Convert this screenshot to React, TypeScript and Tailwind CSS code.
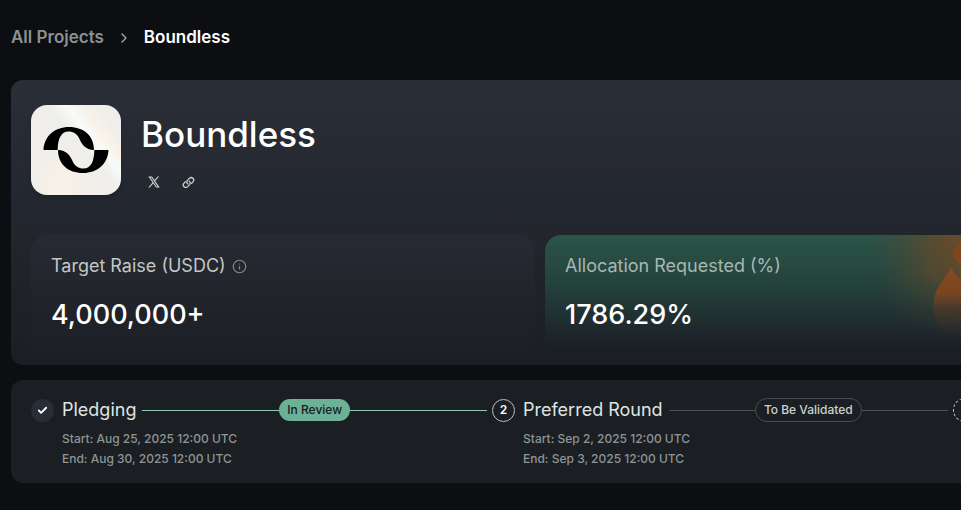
import type { ReactNode } from 'react';
import { Check, ChevronRight, Info } from 'lucide-react';

function BoundlessLogo() {
  const half =
    'M12.5 45 C13 31 24 22 38 22 C53 22 63 31 63 45 C54.5 44.5 51 40 48 33 C46 29 42.5 26.5 37.5 26.5 C30 26.5 26.7 34 26.7 45 Z';
  return (
    <div className="size-[90px] shrink-0 overflow-hidden rounded-2xl bg-[#efeeea] bg-[linear-gradient(50deg,transparent_56%,#f8fbf9_66%,#f9f2e8_74%,transparent_86%),radial-gradient(ellipse_at_35%_88%,#fbf2e6_0%,transparent_35%)] shadow-md">
      <svg viewBox="0 0 90 90" className="size-full" role="img" aria-label="Boundless logo">
        <path d={half} fill="#000" />
        <path d={half} fill="#000" transform="rotate(180 45 45)" />
      </svg>
    </div>
  );
}

function XIcon() {
  return (
    <svg viewBox="0 0 24 24" className="size-3" fill="currentColor" aria-hidden="true">
      <path d="M0.6 1h7.3l5.2 7.1L19.4 1h2.9l-7.9 9 9.1 13h-7.3l-5.8-8L3.500 23H.6l8.500-9.800zM4.700 3.200 17.300 20.800h2L6.800 3.200z" />
    </svg>
  );
}

function LinkIcon() {
  return (
    <svg
      viewBox="0 0 24 24"
      className="size-[13px] shrink-0"
      fill="none"
      stroke="currentColor"
      strokeWidth="2.4"
      strokeLinecap="round"
      aria-hidden="true"
    >
      <path d="M10.500 14.500a4.600 4.600 0 0 1-.4-6.500l3.400-3.600a4.600 4.600 0 0 1 6.700 6.400l-2.400 2.600" />
      <path d="M13.500 9.500a4.600 4.600 0 0 1 .4 6.500l-3.400 3.600a4.600 4.600 0 0 1-6.700-6.400l2.400-2.600" />
    </svg>
  );
}

function Flame() {
  return (
    <svg
      viewBox="0 0 180 120"
      preserveAspectRatio="none"
      className="absolute top-0 right-0 h-[120px] w-[180px]"
      aria-hidden="true"
    >
      <defs>
        <radialGradient id="glow" gradientUnits="userSpaceOnUse" cx="112" cy="22" r="112">
          <stop offset="0" stopColor="#7d4a22" stopOpacity="0.9" />
          <stop offset="0.45" stopColor="#63492c" stopOpacity="0.85" />
          <stop offset="1" stopColor="#45483a" stopOpacity="0" />
        </radialGradient>
        <linearGradient id="flame" x1="0" y1="0" x2="0" y2="1">
          <stop offset="0" stopColor="#874a20" />
          <stop offset="0.35" stopColor="#79451f" />
          <stop offset="0.55" stopColor="#4a392c" />
          <stop offset="1" stopColor="#2e2925" stopOpacity="0" />
        </linearGradient>
        <linearGradient id="fade" x1="0" y1="0" x2="0" y2="1">
          <stop offset="0" stopColor="#fff" />
          <stop offset="0.35" stopColor="#ccc" />
          <stop offset="0.9" stopColor="#000" />
        </linearGradient>
        <mask id="fadeMask">
          <rect width="180" height="120" fill="url(#fade)" />
        </mask>
      </defs>
      <rect width="180" height="120" fill="url(#glow)" mask="url(#fadeMask)" />
      <path d="M82 33C86 40 92 44 98 50L124 104H92C70 100 62 84 65 64C67 52 77 43 82 33Z" fill="url(#flame)" />
      <path d="M108 0C92 5 81 14 85 23C87 28 92 29 100 30Z" fill="#80451f" />
    </svg>
  );
}

function Metric({ label, value, info, highlight }: { label: string; value: string; info?: boolean; highlight?: boolean }) {
  return (
    <div
      className={
        highlight
          ? 'relative overflow-hidden rounded-2xl bg-linear-to-b from-[#2c5549] via-[#24423c] via-40% to-[#1b1e26] to-95% px-5 pt-[17px] pb-[22px]'
          : 'relative rounded-2xl bg-linear-to-b from-[#272a32] to-[#1c1f25] px-5 pt-[17px] pb-[22px]'
      }
    >
      {highlight && <Flame />}
      <div className="relative flex items-center gap-1.5">
        <h2 className={highlight ? 'text-lg leading-7 text-[#a6b8b2]' : 'text-lg leading-7 text-[#c2c8c5]'}>{label}</h2>
        {info && (
          <button type="button" aria-label="About the target raise" className="text-[#868b8d]">
            <Info size={15} strokeWidth={1.8} />
          </button>
        )}
      </div>
      <p className="relative mt-[17px] text-[27px] leading-9 font-medium text-white">{value}</p>
    </div>
  );
}

type StepProps = {
  marker: ReactNode;
  title: string;
  lines: string[];
  badge: ReactNode;
  active?: boolean;
};

function Step({ marker, title, lines, badge, active }: StepProps) {
  return (
    <li className="min-w-0 flex-1">
      <div className="flex h-6 items-center">
        {marker}
        <h3 className="mr-1.5 ml-2 text-lg leading-6 whitespace-nowrap text-[#dfe5e2]">{title}</h3>
        <span className={active ? 'h-px flex-1 bg-[#8fc9b4]' : 'h-px flex-1 bg-[#4a5256]'} />
        {badge}
        <span className={active ? 'mr-[5px] h-px flex-1 bg-[#8fc9b4]' : 'mr-[5px] h-px flex-1 bg-[#4a5256]'} />
      </div>
      <div className="mt-[7px] ml-[31px] text-xs leading-5 font-medium text-[#8e9596]">
        {lines.map((text) => (
          <p key={text}>{text}</p>
        ))}
      </div>
    </li>
  );
}

export default function App() {
  return (
    <div className="min-h-screen overflow-hidden bg-[#0d0e12] font-['Inter','Liberation_Sans',sans-serif] text-white">
      <main className="w-[calc(100%+108px)] pt-[25px] pl-[11px]">
        <nav aria-label="Breadcrumb" className="flex h-[26px] items-center gap-3 text-[17px] font-semibold">
          <a href="#projects" className="text-[#8b9291]">
            All Projects
          </a>
          <ChevronRight size={16} className="text-[#a4aaa9]" aria-hidden="true" />
          <span aria-current="page">Boundless</span>
        </nav>

        <section className="mt-[29px] rounded-xl bg-linear-to-b from-[#2a2e37] to-[#1b1e24] px-5 pt-[25px] pb-[10px]">
          <header className="flex gap-5">
            <BoundlessLogo />
            <div>
              <h1 className="pt-1 text-[35px] leading-[50px] font-medium">Boundless</h1>
              <div className="mt-[17px] flex gap-[22px] pl-[7px] text-[#c9d3d0]">
                <a href="#x" aria-label="Boundless on X" className="flex size-3 items-center">
                  <XIcon />
                </a>
                <a href="#website" aria-label="Boundless website" className="flex size-3 items-center">
                  <LinkIcon />
                </a>
              </div>
            </div>
          </header>
          <div className="mt-10 grid grid-cols-2 gap-[10px]">
            <Metric label="Target Raise (USDC)" value="4,000,000+" info />
            <Metric label="Allocation Requested (%)" value="1786.29%" highlight />
          </div>
        </section>

        <section aria-label="Timeline" className="mt-[15px] rounded-xl bg-[#1b1f23] px-5 pt-[18px] pb-[14px]">
          <ol className="flex">
            <Step
              active
              title="Pledging"
              lines={['Start: Aug 25, 2025 12:00 UTC', 'End: Aug 30, 2025 12:00 UTC']}
              marker={
                <span className="flex size-[23px] shrink-0 items-center justify-center rounded-full bg-[#292d36]">
                  <Check size={11} strokeWidth={4} />
                </span>
              }
              badge={
                <span className="rounded-full bg-[#6cb095] px-2 text-xs leading-[22px] font-medium text-[#17211f]">
                  In Review
                </span>
              }
            />
            <Step
              title="Preferred Round"
              lines={['Start: Sep 2, 2025 12:00 UTC', 'End: Sep 3, 2025 12:00 UTC']}
              marker={
                <span className="flex size-[23px] shrink-0 items-center justify-center rounded-full border border-[#b9c1bf] text-xs font-semibold">
                  2
                </span>
              }
              badge={
                <span className="rounded-full border border-[#454c59] px-2 text-xs leading-[22px] font-medium text-[#c9d1ce]">
                  To Be Validated
                </span>
              }
            />
            <li className="w-24">
              <span className="block size-6 rounded-full border border-dashed border-[#b9c1bf]" />
            </li>
          </ol>
        </section>
      </main>
    </div>
  );
}
